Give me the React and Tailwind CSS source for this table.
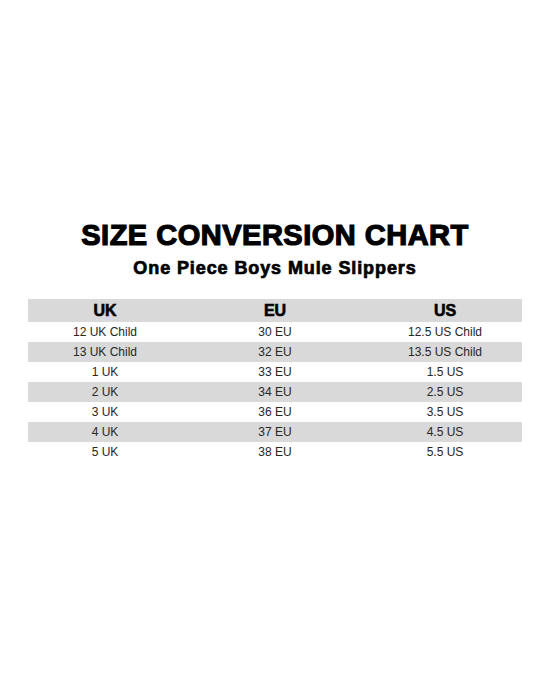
const rows = [
  ['12 UK Child', '30 EU', '12.5 US Child'],
  ['13 UK Child', '32 EU', '13.5 US Child'],
  ['1 UK', '33 EU', '1.5 US'],
  ['2 UK', '34 EU', '2.5 US'],
  ['3 UK', '36 EU', '3.5 US'],
  ['4 UK', '37 EU', '4.5 US'],
  ['5 UK', '38 EU', '5.5 US'],
];

export default function App() {
  return (
    <div className="w-[550px] h-[700px] bg-white font-['Liberation_Sans',Arial,sans-serif] pt-[218px] px-[28px]">
      <h1 className="text-center text-[29px] leading-[34px] font-bold text-black tracking-[0.5px] [-webkit-text-stroke:1.2px_black]">
        SIZE CONVERSION CHART
      </h1>
      <h2 className="mt-[6px] text-center text-[18px] leading-[20px] font-bold text-black tracking-[0.9px] [-webkit-text-stroke:0.7px_black]">
        One Piece Boys Mule Slippers
      </h2>
      <div className="mt-[21px] w-[494px]">
        <div className="grid grid-cols-[154px_186px_154px] h-[23px] items-center bg-[#d9d9d9] text-[16px] font-bold text-black [-webkit-text-stroke:0.6px_black]">
          <div className="text-center">UK</div>
          <div className="text-center">EU</div>
          <div className="text-center">US</div>
        </div>
        {rows.map((r, i) => (
          <div
            key={i}
            className={`grid grid-cols-[154px_186px_154px] h-[20px] items-center text-[12px] text-[#262626] ${i % 2 === 1 ? 'bg-[#d9d9d9]' : 'bg-white'}`}
          >
            <div className="text-center">{r[0]}</div>
            <div className="text-center">{r[1]}</div>
            <div className="text-center">{r[2]}</div>
          </div>
        ))}
      </div>
    </div>
  );
}
